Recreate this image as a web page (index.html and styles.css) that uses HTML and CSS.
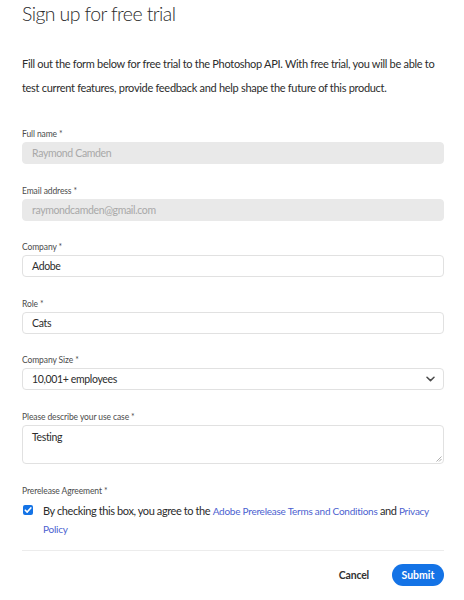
FILE: index.html
```html
<!DOCTYPE html>
<html lang="en">
<head>
<meta charset="utf-8">
<title>Sign up for free trial</title>
<link rel="stylesheet" href="styles.css">
</head>
<body>
<div class="page">
  <h1 class="title">Sign up for free trial</h1>
  <p class="intro">Fill out the form below for free trial to the Photoshop API. With free trial, you will be able to test current features, provide feedback and help shape the future of this product.</p>
  <form class="form">
    <div class="field">
      <label class="label">Full name <span class="req">*</span></label>
      <div class="input input-disabled">Raymond Camden</div>
    </div>
    <div class="field">
      <label class="label">Email address <span class="req">*</span></label>
      <div class="input input-disabled">raymondcamden@gmail.com</div>
    </div>
    <div class="field">
      <label class="label">Company <span class="req">*</span></label>
      <div class="input">Adobe</div>
    </div>
    <div class="field">
      <label class="label">Role <span class="req">*</span></label>
      <div class="input">Cats</div>
    </div>
    <div class="field">
      <label class="label">Company Size <span class="req">*</span></label>
      <div class="input select"><span>10,001+ employees</span>
        <svg class="chevron" width="9" height="6" viewBox="0 0 9 6"><path d="M1 1.2 L4.5 4.6 L8 1.2" fill="none" stroke="#4b4b4b" stroke-width="1.5" stroke-linecap="round" stroke-linejoin="round"/></svg>
      </div>
    </div>
    <div class="field">
      <label class="label">Please describe your use case <span class="req">*</span></label>
      <div class="input textarea">Testing
        <svg class="grip" width="6" height="6" viewBox="0 0 6 6"><path d="M5.5 0.5 L0.5 5.5 M5.5 3 L3 5.5" stroke="#9a9a9a" stroke-width="0.8"/></svg>
      </div>
    </div>
    <div class="field field-agree">
      <label class="label">Prerelease Agreement <span class="req">*</span></label>
      <div class="agree">
        <span class="checkbox"><svg width="10" height="10" viewBox="0 0 10 10"><path d="M2.3 5.2 L4.2 7.1 L7.8 2.9" fill="none" stroke="#fff" stroke-width="1.6" stroke-linecap="round" stroke-linejoin="round"/></svg></span>
        <p class="agree-text">By checking this box, you agree to the <a class="link" href="#">Adobe Prerelease Terms and Conditions</a> and <a class="link" href="#">Privacy Policy</a></p>
      </div>
    </div>
    <hr class="divider">
    <div class="actions">
      <button type="button" class="btn btn-cancel">Cancel</button>
      <button type="button" class="btn btn-submit">Submit</button>
    </div>
  </form>
</div>
</body>
</html>
```
FILE: styles.css
```css
* { box-sizing: border-box; }
html, body { margin: 0; padding: 0; background: #fff; }
body {
  font-family: "Lato", "Open Sans", sans-serif;
  color: #2c2c2c;
}
.page {
  padding: 0 20px 0 22px;
}
.title {
  margin: 0;
  padding-top: 1px;
  font-size: 19.5px;
  line-height: 26px;
  font-weight: 300;
  letter-spacing: -0.6px;
  color: #2c2c2c;
}
.intro {
  margin: 25px 0 0;
  font-size: 11px;
  line-height: 24px;
  letter-spacing: -0.3px;
  color: #2c2c2c;
}
.form {
  margin-top: 27px;
  display: flex;
  flex-direction: column;
}
.field {
  display: flex;
  flex-direction: column;
  margin-bottom: 19.6px;
}
.label {
  font-size: 8.5px;
  line-height: 14px;
  color: #4b4b4b;
  margin-bottom: 1px;
  letter-spacing: -0.1px;
}
.req { font-size: 8.5px; color: #505050; }
.input {
  height: 22px;
  border: 1px solid #e1e1e1;
  border-radius: 4px;
  padding: 0 9px;
  font-size: 10.5px;
  line-height: 20px;
  color: #2c2c2c;
  background: #fff;
  letter-spacing: -0.35px;
}
.input-disabled {
  background: #e9e9e9;
  border-color: #e9e9e9;
  color: #a8a8a8;
}
.select {
  display: flex;
  align-items: center;
  justify-content: space-between;
  padding-right: 8px;
}
.chevron { flex: none; }
.textarea {
  position: relative;
  height: 39px;
  padding-top: 1px;
}
.grip {
  position: absolute;
  right: 1px;
  bottom: 1px;
}
.field-agree { margin-bottom: 0; }
.agree {
  display: flex;
  align-items: flex-start;
  margin-top: 3px;
}
.checkbox {
  flex: none;
  width: 10px;
  height: 10px;
  margin: 3.5px 10px 0 1px;
  background: #1473e6;
  border-radius: 2px;
  display: flex;
}
.agree-text {
  margin: 0;
  font-size: 11px;
  line-height: 17px;
  letter-spacing: -0.4px;
  color: #2c2c2c;
}
.link {
  color: #4b5fd0;
  text-decoration: none;
  font-size: 10px;
  letter-spacing: -0.25px;
}
.divider {
  margin: 12px 0 0;
  border: 0;
  border-top: 1px solid #ececec;
}
.actions {
  display: flex;
  justify-content: flex-end;
  align-items: center;
  gap: 23px;
  margin-top: 13px;
}
.btn {
  font-family: inherit;
  font-weight: 700;
  font-size: 10.5px;
  border: 0;
  cursor: pointer;
}
.btn-cancel {
  background: none;
  color: #323232;
  padding: 0;
  letter-spacing: -0.2px;
}
.btn-submit {
  height: 22px;
  width: 52px;
  border-radius: 11px;
  background: #1473e6;
  color: #fff;
  padding: 0;
}
```
